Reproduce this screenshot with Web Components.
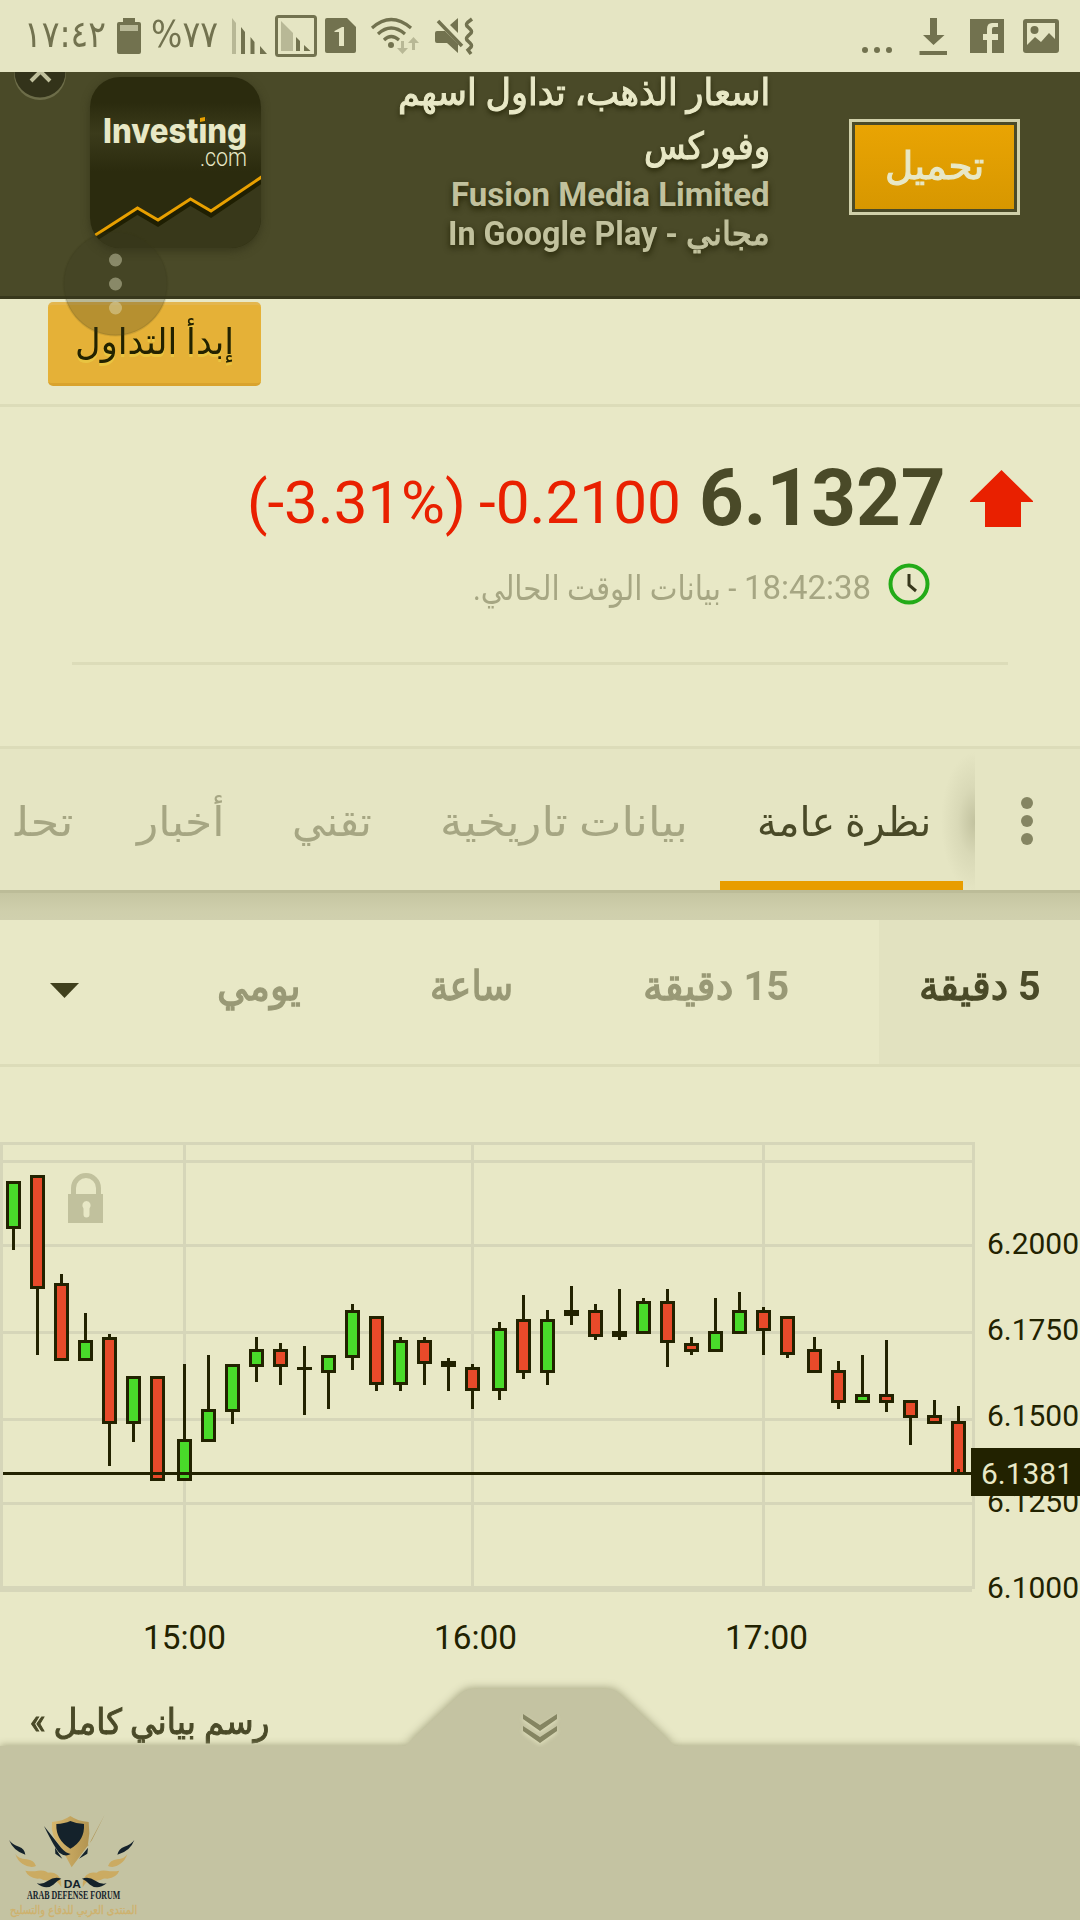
<!DOCTYPE html>
<html lang="ar">
<head>
<meta charset="utf-8">
<title>Investing</title>
<style>
  body {
    margin: 0;
    width: 1080px;
    height: 1920px;
    overflow: hidden;
    background: #e8e8c6;
    color: #4a4a28;
    font-family: Roboto, "DejaVu Sans", sans-serif;
  }
</style>
</head>
<body>
<market-app></market-app>

<script>
// Base class: every component renders its styles and markup in an open root
class BaseElement extends HTMLElement {
  constructor() {
    super();
    this.attachShadow({ mode: "open" });
  }

  connectedCallback() {
    this.shadowRoot.innerHTML = `<style>${this.constructor.styles}</style>${this.markup()}`;
    this.ready();
  }

  ready() {}
}

// One line of text, stretched to the width given in "w"
class FitText extends BaseElement {
  static get styles() {
    return /* css */ `
      :host { display: block; flex: none; line-height: 1; white-space: nowrap; direction: ltr; }
      span { display: inline-block; transform-origin: 0 50%; }
    `;
  }

  markup() {
    const dir = this.getAttribute("dir") || "rtl";
    return `<span dir="${dir}"><slot></slot></span>`;
  }

  ready() {
    const width = Number(this.getAttribute("w"));
    const span = this.shadowRoot.querySelector("span");
    this.style.width = `${width}px`;
    this.style.height = "1em";
    span.style.transform = `scaleX(${width / span.offsetWidth})`;
  }
}

class StatusBar extends BaseElement {
  static get styles() {
    return /* css */ `
      :host { display: flex; justify-content: space-between; height: 72px; background: #e5e5c3; color: #72724f; direction: ltr; }
      div { display: flex; }
      .left { padding-left: 24px; }
      fit-text { font-size: 37px; margin-top: 16px; font-family: "DejaVu Sans", sans-serif; }
      .battery { margin: 0 10px 0 11px; }
      svg { display: block; fill: #72724f; }
    `;
  }

  markup() {
    return /* html */ `
      <div class="left">
        <fit-text w="82" dir="ltr">&#x202D;١٧:٤٢&#x202C;</fit-text>
        <svg class="battery" width="24" height="72" viewBox="117 0 24 72">
          <path d="M123 18h12v4h4q2 0 2 2v28q0 2-2 2h-20q-2 0-2-2V24q0-2 2-2h4z"/>
          <path fill="#b8b896" d="M120 25h18v6h-18z"/>
        </svg>
        <fit-text w="67" dir="ltr">&#x202D;%٧٧&#x202C;</fit-text>
        <svg width="260" height="72" viewBox="218 0 260 72">
          <path fill="#b8b896" d="M232 18l4 5v31h-4z"/>
          <path d="M241 27l4 5v22h-4zM250.500 37l4 5v12h-4zM260 46l7 8h-7z"/>
          <rect x="276.500" y="16.500" width="39" height="39" rx="2" fill="none" stroke="#72724f" stroke-width="3"/>
          <path fill="#b8b896" d="M281 21l12 12v18h-12z"/>
          <path d="M296 37l4 4v10h-4zM304 45l6.500 6h-6.500z"/>
          <path d="M327 18h20l9 9v24q0 2-2 2h-27q-2 0-2-2V20q0-2 2-2z"/>
          <path fill="#e5e5c3" d="M334.500 31l7.500-4h2v19h-5V32h-4.500z"/>
          <g fill="none" stroke="#72724f" stroke-width="3.200">
            <path d="M372 28q19-17 39 0M378 34q13-12 27 0M384 40q7-7 15 0"/>
          </g>
          <circle cx="391" cy="45" r="3"/>
          <path fill="#b8b896" d="M401 41h3v7h4l-5.500 6-5.500-6h4zM412 50h3v-7h4l-5.500-6-5.500 6h4z"/>
          <path d="M437 31h8l13 13v9l-11-10h-10q-2 0-2-2v-8q0-2 2-2zM450 25l8-7v15z"/>
          <path fill="none" stroke="#72724f" stroke-width="3.500" d="M438 21l24 25M472 19l-4 3q-3 3 0 5l2 2q3 3 0 5l-2 2q-3 3 0 5l2 2q3 3 0 5l-2 2 3 4"/>
        </svg>
      </div>
      <svg width="220" height="72" viewBox="860 0 220 72">
        <circle cx="865" cy="50" r="3"/><circle cx="877" cy="50" r="3"/><circle cx="889" cy="50" r="3"/>
        <path d="M930 18h7v17h7.500l-11 10-10.500-10h7zM919.500 51h27.500v4h-27.500z"/>
        <path d="M970 19h34v34h-12V40h6v-6h-6v-5q0-2 2-2h4v-4h-6q-5 0-5 6v5h-4v6h4v13h-17z"/>
        <path fill-rule="evenodd" d="M1026 19h30q3 0 3 3v28q0 3-3 3h-30q-3 0-3-3V22q0-3 3-3zM1027 23v22l8-8 6 5 8-9 6 6V23z"/>
        <circle cx="1034.500" cy="30" r="4"/>
      </svg>
    `;
  }
}

class AppBanner extends BaseElement {
  static get styles() {
    return /* css */ `
      :host {
        display: flex; box-sizing: border-box; height: 227px; position: relative;
        background: #4a4a28; border-bottom: 3px solid #38381c; direction: ltr; overflow: hidden;
      }
      .close { position: absolute; left: 0; top: 0; }
      .logo { display: block; margin: 5px 0 0 90px; width: 171px; height: 171px; flex: none; border-radius: 30px; box-shadow: 0 3px 8px #38381c; }
      .info { display: flex; flex-direction: column; align-items: flex-end; width: 509px; color: #c1c19d; text-shadow: 0 3px 6px #222204; -webkit-text-stroke: 1.1px; }
      b { -webkit-text-stroke: 0; }
      .title { color: #e8e8c6; font-size: 37px; }
      .small { font-size: 33px; }
      .button {
        display: flex; justify-content: center; box-sizing: border-box; width: 171px; height: 96px; margin: 47px 0 0 79px;
        border: 3px solid #d0d0aa; padding: 3px; color: #e8e8c6; font-size: 38px; -webkit-text-stroke: 1.1px;
        background: linear-gradient(#e9a403, #d79700) content-box;
      }
    `;
  }

  markup() {
    return /* html */ `
      <svg class="close" width="80" height="40" viewBox="0 72 80 40">
        <circle cx="40" cy="74" r="26" fill="#85855f" opacity=".6"/>
        <circle cx="40" cy="72" r="25.500" fill="#33331a"/>
        <path d="M31 62l19 19M50 62l-19 19" stroke="#c1c19d" stroke-width="4"/>
      </svg>
      <svg class="logo" viewBox="90 77 171 171">
        <defs>
          <linearGradient id="bg" x2="0" y2="1">
            <stop offset="0" stop-color="#2b2b0e"/><stop offset=".15" stop-color="#2b2b0e"/>
            <stop offset=".33" stop-color="#3b3b1b"/><stop offset=".55" stop-color="#2b2b0e"/>
          </linearGradient>
        </defs>
        <path fill="url(#bg)" d="M90 77h171v171H90z"/>
        <path fill="#38381a" d="M90 238l47.500-30 20.500 12 32.500-21 20.500 12 50-34v71H90z"/>
        <path fill="none" stroke="#1f1f02" stroke-width="5" d="M95 239l42.500-27 20.500 12 32.500-21 20.500 12 52-35"/>
        <path fill="none" stroke="#e8a000" stroke-width="3" d="M94 236l43.500-28 20.500 12 32.500-21 20.500 12 52-35"/>
        <text x="103" y="143" font-family="Inter, sans-serif" font-weight="800" font-size="34" fill="#e8e8c6" textLength="144" lengthAdjust="spacingAndGlyphs">Investing</text>
        <text x="200" y="166" font-family="Roboto, sans-serif" font-weight="300" font-size="25" fill="#e8e8c6" textLength="47" lengthAdjust="spacingAndGlyphs">.com</text>
        <path fill="#35350f" d="M198 114h8v10h-8z"/>
        <path fill="#e8a000" d="M200 118l5-1v4l-5 1z"/>
      </svg>
      <div class="info">
        <fit-text class="title" w="372" style="margin-top:2px">اسعار الذهب، تداول اسهم</fit-text>
        <fit-text class="title" w="126" style="margin-top:17px">وفوركس</fit-text>
        <fit-text class="small" dir="ltr" w="319" style="margin-top:13px"><b>Fusion Media Limited</b></fit-text>
        <fit-text class="small" w="322" style="margin-top:6px">مجاني <b>- In Google Play</b></fit-text>
      </div>
      <div class="button"><fit-text w="99" style="margin-top:22px">تحميل</fit-text></div>
    `;
  }
}

class TradeBar extends BaseElement {
  static get styles() {
    return /* css */ `
      :host { display: flex; box-sizing: border-box; height: 108px; padding: 3px 0 0 48px; border-bottom: 3px solid #dcdcb9; position: relative; direction: ltr; }
      .trade {
        display: flex; justify-content: center; box-sizing: border-box; width: 213px; height: 84px; border-radius: 5px;
        background: #e5b137; border-top: 3px solid #e3b64f; border-bottom: 3px solid #d9a32d;
        color: #222200; font-size: 36px; text-shadow: 0 3px 0 #e9c441;
      }
      .assist { position: absolute; left: 62px; top: -69px; }
    `;
  }

  markup() {
    return /* html */ `
      <div class="trade"><fit-text w="159" style="margin-top:19px">إبدأ التداول</fit-text></div>
      <svg class="assist" width="107" height="108" viewBox="62 230 107 108">
        <circle cx="115.500" cy="283.500" r="52" fill="#38381c" fill-opacity=".27" stroke="#38381c" stroke-opacity=".12" stroke-width="2"/>
        <g fill="#e8e8c6" fill-opacity=".42"><circle cx="115.500" cy="260" r="6.500"/><circle cx="115.500" cy="284" r="6.500"/><circle cx="115.500" cy="308" r="6.500"/></g>
      </svg>
    `;
  }
}

class QuotePanel extends BaseElement {
  static get styles() {
    return /* css */ `
      :host { display: block; height: 339px; direction: ltr; }
      .row { display: flex; justify-content: flex-end; align-items: flex-start; }
      .price { height: 156px; padding-right: 47px; }
      .change { color: #e92000; font-size: 60px; margin: 66px 13px 0 0; }
      .last { font-size: 79px; font-weight: bold; margin: 52px 24px 0 5px; }
      .arrow { margin-top: 63px; }
      .time { height: 99px; padding-right: 150px; color: #a6a683; font-size: 34px; }
      .clock { margin-left: 17px; }
      hr { margin: 0 72px; border: 0; height: 3px; background: #dcdcb9; }
    `;
  }

  markup() {
    return /* html */ `
      <div class="row price">
        <fit-text class="change" dir="ltr" w="219">(-3.31%)</fit-text>
        <fit-text class="change" dir="ltr" w="202">-0.2100</fit-text>
        <fit-text class="last" dir="ltr" w="247">6.1327</fit-text>
        <svg class="arrow" width="63" height="57"><path fill="#e92000" d="M31.500 0L63 31v1H51v25H15V32H0v-1z"/></svg>
      </div>
      <div class="row time">
        <fit-text w="263" style="margin:8px 8px 0 0">- بيانات الوقت الحالي.</fit-text>
        <fit-text dir="ltr" w="127" style="margin-top:7px">18:42:38</fit-text>
        <svg class="clock" width="42" height="42">
          <circle cx="21" cy="21" r="18.500" fill="none" stroke="#23ab18" stroke-width="4"/>
          <path fill="none" stroke="#38381c" stroke-width="3" d="M21 11v11l7 6"/>
        </svg>
      </div>
      <hr>
    `;
  }
}

class TabBar extends BaseElement {
  static get styles() {
    return /* css */ `
      :host { display: block; direction: rtl; height: 174px; background: linear-gradient(#c6c6a2, #cfcfac 70%, #d0d0ae) 0 147px / 100% 27px no-repeat; }
      nav { display: flex; box-sizing: border-box; height: 147px; background: #e5e5c3; border-top: 3px solid #dcdcb9; border-bottom: 3px solid #bcbc98; }
      .more { flex: none; box-sizing: border-box; width: 105px; padding-left: 3px; display: flex; align-items: center; justify-content: center; }
      .more svg { margin-left: 1px; }
      .list { display: flex; width: 960px; padding-right: 12px; overflow: hidden; background: radial-gradient(ellipse 34px 70px at 100% 73px, #c2c29f, #d9d9b7 50%, #e5e5c300); }
      .tab { flex: none; box-sizing: border-box; padding: 53px 34px 0; color: #a6a683; font-size: 41px; }
      .active { padding-right: 32px; padding-left: 37px; color: #4a4a28; border-bottom: 9px solid #e89d00; }
    `;
  }

  markup() {
    return /* html */ `
      <nav>
        <div class="more"><svg style="position:relative;left:-3px" width="12" height="54" viewBox="0 4 12 54" fill="#858562"><circle cx="6" cy="14" r="6"/><circle cx="6" cy="32" r="6"/><circle cx="6" cy="50" r="6"/></svg></div>
        <div class="list">
          <div class="tab active"><fit-text w="174">نظرة عامة</fit-text></div>
          <div class="tab" style="padding-right:32px"><fit-text w="248">بيانات تاريخية</fit-text></div>
          <div class="tab"><fit-text w="80">تقني</fit-text></div>
          <div class="tab"><fit-text w="87">أخبار</fit-text></div>
          <div class="tab" style="padding-right:30px"><fit-text w="58">تحل&zwj;</fit-text></div>
        </div>
      </nav>
    `;
  }
}

class PeriodBar extends BaseElement {
  static get styles() {
    return /* css */ `
      :host { display: flex; box-sizing: border-box; height: 147px; border-bottom: 3px solid #dcdcb9; direction: rtl; color: #999976; font-size: 41px; -webkit-text-stroke: 1.3px; }
      div { box-sizing: border-box; padding-top: 46px; }
      b { -webkit-text-stroke: 0; }
      .active { width: 201px; padding-right: 39px; background: #e2e2c0; color: #4a4a28; }
      svg { display: block; margin: 63px 138px 0 0; }
    `;
  }

  markup() {
    return /* html */ `
      <div class="active"><fit-text w="122"><b>5</b> دقيقة</fit-text></div>
      <div style="padding-right:90px"><fit-text w="146"><b>15</b> دقيقة</fit-text></div>
      <div style="padding-right:130px"><fit-text w="83">ساعة</fit-text></div>
      <div style="padding-right:129px"><fit-text w="84">يومي</fit-text></div>
      <svg width="29" height="15"><path fill="#40401d" d="M0 0h29L14.500 15z"/></svg>
    `;
  }
}

// [x, body top, body bottom, wick top, wick bottom, kind]
const CANDLES = [
  [6, 1181, 1229, 1181, 1250, "up"], [30, 1175, 1289, 1175, 1355, "down"],
  [54, 1283, 1361, 1274, 1361, "down"], [78, 1340, 1361, 1313, 1361, "up"],
  [102, 1337, 1424, 1334, 1466, "down"], [126, 1376, 1424, 1376, 1442, "up"],
  [150, 1376, 1481, 1376, 1481, "down"], [177, 1439, 1481, 1364, 1481, "up"],
  [201, 1409, 1442, 1355, 1442, "up"], [225, 1364, 1412, 1364, 1424, "up"],
  [249, 1349, 1367, 1337, 1382, "up"], [273, 1349, 1367, 1343, 1385, "down"],
  [297, 1367, 1370, 1346, 1415, "flat"], [321, 1355, 1373, 1355, 1409, "up"],
  [345, 1310, 1358, 1304, 1370, "up"], [369, 1316, 1385, 1316, 1391, "down"],
  [393, 1340, 1385, 1337, 1391, "up"], [417, 1340, 1364, 1337, 1385, "down"],
  [441, 1361, 1367, 1358, 1391, "flat"], [465, 1367, 1391, 1364, 1409, "down"],
  [492, 1328, 1391, 1322, 1400, "up"], [516, 1319, 1373, 1295, 1379, "down"],
  [540, 1319, 1373, 1310, 1385, "up"], [564, 1310, 1316, 1286, 1325, "flat"],
  [588, 1310, 1337, 1304, 1340, "down"], [612, 1331, 1337, 1289, 1340, "flat"],
  [636, 1301, 1334, 1298, 1334, "up"], [660, 1301, 1343, 1289, 1367, "down"],
  [684, 1343, 1352, 1337, 1355, "down"], [708, 1331, 1352, 1298, 1352, "up"],
  [732, 1310, 1334, 1292, 1334, "up"], [756, 1310, 1331, 1307, 1355, "down"],
  [780, 1316, 1355, 1316, 1358, "down"], [807, 1349, 1373, 1337, 1373, "down"],
  [831, 1370, 1403, 1361, 1409, "down"], [855, 1394, 1403, 1355, 1403, "up"],
  [879, 1394, 1403, 1340, 1412, "down"], [903, 1400, 1418, 1400, 1445, "down"],
  [927, 1415, 1424, 1400, 1424, "down"], [951, 1421, 1475, 1406, 1475, "down"]
];

class CandleChart extends BaseElement {
  static get styles() {
    return /* css */ `
      :host { display: block; height: 609px; direction: ltr; }
      svg { display: block; font-family: Roboto, sans-serif; }
      .grid { fill: #d6d6b9; }
      .ink { fill: #222200; }
      .up { fill: #49db2a; }
      .down { fill: #e84a2a; }
    `;
  }

  candle([x, top, bottom, high, low, kind]) {
    const wick = `<rect class="ink" x="${x + 6}" y="${high}" width="3" height="${low - high}"/>`;
    const body = `<rect class="ink" x="${x}" y="${top}" width="15" height="${bottom - top}"/>`;
    if (kind === "flat") return wick + body;
    return `${wick}${body}<rect class="${kind}" x="${x + 3}" y="${top + 3}" width="9" height="${bottom - top - 6}"/>`;
  }

  markup() {
    const rows = [1142, 1160, 1244, 1331, 1418, 1502, 1586, 1589].map((y) => `<rect x="0" y="${y}" width="972" height="3"/>`).join("");
    const cols = [0, 183, 471, 762, 972].map((x) => `<rect x="${x}" y="1142" width="3" height="447"/>`).join("");
    const prices = ["6.2000", "6.1750", "6.1500", "6.1250", "6.1000"]
      .map((p, i) => `<text x="987" y="${1254 + i * 86}" textLength="92" lengthAdjust="spacingAndGlyphs">${p}</text>`).join("");
    const times = ["15:00", "16:00", "17:00"]
      .map((t, i) => `<text x="${143 + i * 291}" y="1649" font-size="33" textLength="83" lengthAdjust="spacingAndGlyphs">${t}</text>`).join("");

    return /* html */ `
      <svg width="1080" height="609" viewBox="0 1067 1080 609">
        <g class="grid">${rows}${cols}</g>
        <g fill="#c1c19d">
          <path fill="none" stroke="#c1c19d" stroke-width="5" d="M73.500 1196v-8a12.500 12.500 0 0 1 25 0v8"/>
          <path d="M68 1194h35v29H68z"/>
          <path fill="#e8e8c6" d="M86.500 1201a4.500 4.500 0 0 1 3 7.500v6a3 3 0 0 1-6 0v-6a4.500 4.500 0 0 1 3-7.500z"/>
        </g>
        ${CANDLES.map((c) => this.candle(c)).join("")}
        <rect class="ink" x="957" y="1469" width="3" height="5"/>
        <rect class="ink" x="3" y="1472" width="970" height="3"/>
        <g class="ink" font-size="29">${prices}${times}</g>
        <rect class="ink" x="971" y="1448" width="109" height="48"/>
        <text x="981" y="1484" font-size="29" fill="#e8e8c6" textLength="92" lengthAdjust="spacingAndGlyphs">6.1381</text>
      </svg>
    `;
  }
}

class BottomDrawer extends BaseElement {
  static get styles() {
    return /* css */ `
      :host { display: block; position: relative; height: 244px; direction: ltr; }
      .link { padding: 29px 0 0 30px; height: 41px; font-size: 35px; -webkit-text-stroke: 1px; }
      .panel { height: 174px; background: #c4c3a2; box-shadow: 0 -1px 7px #a9a986; position: relative; }
      .handle { position: absolute; left: 380px; top: -75px; }
      .brand { display: block; padding-top: 54px; }
    `;
  }

  markup() {
    return /* html */ `
      <div class="link"><fit-text w="239">رسم بياني كامل »</fit-text></div>
      <div class="panel">
        <svg class="handle" width="320" height="76" viewBox="380 1671 320 76">
          <path style="filter:drop-shadow(0 -1px 4px #a3a380)" fill="#c4c3a2" d="M405 1746l53-50q7-7 14-7h136q7 0 14 7l53 50z"/>
          <path fill="#c4c3a2" d="M395 1746h290v2H395z"/>
          <path style="filter:drop-shadow(0 2px 2px #dedebb)" fill="#858562" d="M523 1714l17 11 17-11v5l-17 12-17-12zM523 1726l17 11 17-11v5l-17 12-17-12z"/>
        </svg>
        <svg class="brand" width="150" height="120" viewBox="0 0 450 360">
          <defs>
            <linearGradient id="gold"><stop offset="0" stop-color="#d6b66c"/><stop offset="1" stop-color="#a48645"/></linearGradient>
          </defs>
          <path fill="url(#gold)" d="M156 66q32-2 55-18 23 16 55 18l2 34-5 40 51-96-38 76-61 82-36-66q-28-28-23-70z"/>
          <path fill="#14222b" d="M169 72q25-1 42-9 17 8 41 9 3 50-41 74-44-26-42-74z"/>
          <path fill="#14222b" d="M132 78l52 66q14 16 28 18-16 10-34-4-12-10-46-80zM165 143l22 33-21-15zM264 143l-27 33 25-15z"/>
          <path fill="#14222b" d="M27 120q10 14 30 20 17 6 19 24-35-10-49-44zM403 120q-10 14-30 20-17 6-21 24 39-10 51-44z"/>
          <g fill="#cbab62">
            <path d="M46 162q8 14 34 16 22 2 28 20-18 8-40-6-16-10-22-30zM382 162q-8 14-30 16-22 2-28 20 18 8 36-6 16-10 22-30z"/>
            <path d="M76 212q20 4 38 0 24-4 36 12-8 10-38 12-28-4-36-24zM358 212q-20 4-38 0-24-4-36 12 8 10 38 12 28-4 36-24z"/>
            <path d="M118 234q22-22 46-14 22 8 20 42-12-24-34-20-18 2-32-8zM314 234q-22-22-46-14-22 8-20 42 12-24 34-20 18 2 32-8z"/>
          </g>
          <path fill="#14222b" d="M110 250q18 4 34-8 20-14 40-6-14 6-24 18-22 18-50-4zM320 250q-18 4-34-8-20-14-40-6 14 6 24 18 22 18 50-4z"/>
          <text x="191" y="264" font-family="Liberation Sans, sans-serif" font-weight="bold" font-size="34" fill="#14222b" textLength="52" lengthAdjust="spacingAndGlyphs">DA</text>
          <text x="81" y="298" font-family="Liberation Serif, serif" font-weight="bold" font-size="36" fill="#14222b" textLength="280" lengthAdjust="spacingAndGlyphs">ARAB DEFENSE FORUM</text>
          <text x="30" y="341" font-family="DejaVu Sans, sans-serif" font-size="36" fill="#cfb26d" stroke="#cfb26d" textLength="382" lengthAdjust="spacingAndGlyphs">المنتدى العربي للدفاع والتسليح</text>
        </svg>
      </div>
    `;
  }
}

class MarketApp extends BaseElement {
  static get styles() {
    return /* css */ `
      :host { display: flex; flex-direction: column; width: 1080px; height: 1920px; overflow: hidden; }
      :host > * { flex: none; }
    `;
  }

  markup() {
    return /* html */ `
      <status-bar></status-bar>
      <app-banner></app-banner>
      <trade-bar></trade-bar>
      <quote-panel></quote-panel>
      <tab-bar></tab-bar>
      <period-bar></period-bar>
      <candle-chart></candle-chart>
      <bottom-drawer></bottom-drawer>
    `;
  }
}

customElements.define("fit-text", FitText);
customElements.define("status-bar", StatusBar);
customElements.define("app-banner", AppBanner);
customElements.define("trade-bar", TradeBar);
customElements.define("quote-panel", QuotePanel);
customElements.define("tab-bar", TabBar);
customElements.define("period-bar", PeriodBar);
customElements.define("candle-chart", CandleChart);
customElements.define("bottom-drawer", BottomDrawer);
customElements.define("market-app", MarketApp);
</script>
</body>
</html>
